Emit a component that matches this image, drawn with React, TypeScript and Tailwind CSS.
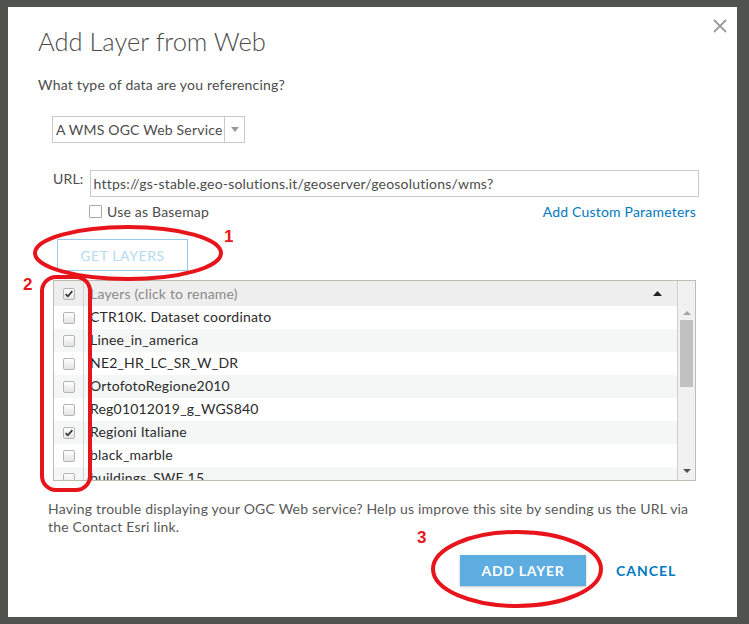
import React from 'react';

const layers = [
	{ name: 'CTR10K. Dataset coordinato', checked: false },
	{ name: 'Linee_in_america', checked: false },
	{ name: 'NE2_HR_LC_SR_W_DR', checked: false },
	{ name: 'OrtofotoRegione2010', checked: false },
	{ name: 'Reg01012019_g_WGS840', checked: false },
	{ name: 'Regioni Italiane', checked: true },
	{ name: 'black_marble', checked: false },
	{ name: 'buildings_SWE 15', checked: false },
];

function Box({ checked }: { checked: boolean }) {
	return (
		<span className="relative flex w-[12px] h-[12px] rounded-[2px] border border-[#b5b5b5] bg-gradient-to-b from-white to-[#e4e4e4] items-center justify-center">
			{checked && (
				<svg viewBox="0 0 12 12" className="w-[10px] h-[10px]">
					<path d="M2 6.2 L4.6 8.8 L10 2.6" fill="none" stroke="#333" strokeWidth="2" />
				</svg>
			)}
		</span>
	);
}

function Annotations() {
	return (
		<svg className="absolute inset-0 pointer-events-none" width="749" height="624" viewBox="0 0 749 624">
			<ellipse cx="128" cy="253" rx="93" ry="26" fill="none" stroke="#e8141c" strokeWidth="4" />
			<rect x="42" y="277" width="48" height="213" rx="14" fill="none" stroke="#e8141c" strokeWidth="4" />
			<ellipse cx="517" cy="569" rx="84" ry="37" fill="none" stroke="#e8141c" strokeWidth="4" />
			<text x="224" y="242" fill="#e8141c" fontSize="17" fontWeight="700" fontFamily="Liberation Sans, sans-serif">1</text>
			<text x="23" y="290" fill="#e8141c" fontSize="17" fontWeight="700" fontFamily="Liberation Sans, sans-serif">2</text>
			<text x="417" y="543" fill="#e8141c" fontSize="17" fontWeight="700" fontFamily="Liberation Sans, sans-serif">3</text>
		</svg>
	);
}

export default function App() {
	return (
		<div className="relative w-[749px] h-[624px] overflow-hidden bg-[#50534d] pl-2 pt-[7px] font-['Lato',sans-serif] tracking-[0.2px]">
			{/* Dialog */}
			<div className="relative w-[729px] h-[610px] bg-white pl-[30px] pt-[18px]">
				<button className="absolute right-[10px] top-[12px] w-[14px] h-[14px]">
					<svg viewBox="0 0 14 14" className="w-[14px] h-[14px]">
						<path d="M1 1 L13 13 M13 1 L1 13" stroke="#9a9a9a" strokeWidth="1.8" />
					</svg>
				</button>

				<h2 className="text-[25.5px] leading-[32px] font-light tracking-normal text-[#4c4c4c]">Add Layer from Web</h2>
				<p className="mt-[18px] text-[14px] leading-[20px] text-[#4c4c4c]">What type of data are you referencing?</p>

				{/* Type select */}
				<div className="mt-[21px] ml-[14px] flex w-[193px] h-[27px] border border-[#cacaca]">
					<span className="flex-1 pl-[3px] text-[14px] leading-[25px] text-[#4c4c4c]">A WMS OGC Web Service</span>
					<span className="w-[20px] border-l border-[#cacaca] flex items-center justify-center">
						<svg viewBox="0 0 8 5" className="w-[8px] h-[5px]">
							<path d="M0 0 L8 0 L4 5 Z" fill="#9a9a9a" />
						</svg>
					</span>
				</div>

				{/* URL */}
				<div className="mt-[27px] ml-[15px] flex items-start gap-[6px]">
					<span className="text-[14px] leading-[17px] text-[#4c4c4c]">URL:</span>
					<div className="w-[609px] h-[27px] border border-[#cacaca] pl-[3px] text-[14px] leading-[25px] text-[#4c4c4c]">
						https://gs-stable.geo-solutions.it/geoserver/geosolutions/wms?
					</div>
				</div>
				<div className="mt-[7px] ml-[51px] w-[607px] flex items-center justify-between">
					<label className="flex items-center gap-[5px] text-[14px] leading-[15px] text-[#4c4c4c]">
						<span className="w-[13px] h-[13px] border border-[#a8a8a8] rounded-[1px] bg-white" />
						Use as Basemap
					</label>
					<span className="text-[14px] leading-[15px] text-[#0079c1]">Add Custom Parameters</span>
				</div>

				{/* Get layers */}
				<button className="mt-[20px] ml-[19px] w-[131px] h-[32px] border border-[#92cbec] text-[14px] tracking-[0.6px] text-[#b4dbf2]">
					GET LAYERS
				</button>

				{/* Layers table */}
				<div className="mt-[9px] ml-[15px] w-[643px] h-[201px] border border-[#bdbdb0] flex overflow-hidden">
					<div className="flex-1 flex flex-col">
						<div className="flex h-[25px] shrink-0 bg-[#eeeeee] items-center">
							<div className="w-[30px] h-full border-r border-[#d4d4d4] flex items-center justify-center">
								<Box checked />
							</div>
							<span className="pl-[6px] pb-[1px] flex-1 text-[14px] text-[#8a8a8a]">Layers (click to rename)</span>
							<svg viewBox="0 0 9 5" className="w-[9px] h-[5px] mr-[15px]">
								<path d="M0 5 L9 5 L4.5 0 Z" fill="#222" />
							</svg>
						</div>
						{layers.map((l, i) => (
							<div key={l.name} className={`flex h-[23px] shrink-0 items-center ${i % 2 === 1 ? 'bg-[#f5f7f7]' : 'bg-white'}`}>
								<div className="w-[30px] h-full border-r border-[#d4d4d4] flex items-center justify-center">
									<Box checked={l.checked} />
								</div>
								<span className="pl-[6px] pb-[2px] text-[14px] text-[#2b2b2b]">{l.name}</span>
							</div>
						))}
					</div>
					{/* scrollbar */}
					<div className="w-[18px] h-full border-l border-[#cfcfcf] bg-[#f1f1f1] flex flex-col items-center pt-[27px]">
						<svg viewBox="0 0 8 4" className="w-[8px] h-[4px] mt-[3px]">
							<path d="M0 4 L8 4 L4 0 Z" fill="#a3a3a3" />
						</svg>
						<div className="mt-[5px] w-[13px] h-[67px] bg-[#c1c1c1]" />
						<div className="flex-1" />
						<svg viewBox="0 0 8 4" className="w-[8px] h-[4px] mb-[7px]">
							<path d="M0 0 L8 0 L4 4 Z" fill="#505050" />
						</svg>
					</div>
				</div>

				<p className="mt-[19px] ml-[10px] w-[652px] text-[14px] leading-[18px] text-[#595959]">
					Having trouble displaying your OGC Web service? Help us improve this site by sending us the URL via the Contact Esri link.
				</p>

				<div className="mt-[19px] ml-[422px] flex items-center gap-[30px]">
					<button className="w-[126px] h-[31px] bg-[#5dade0] shadow-[0_1px_2px_rgba(0,0,0,0.25)] text-[14px] font-bold tracking-[0.7px] text-white">
						ADD LAYER
					</button>
					<span className="text-[14px] font-bold tracking-[1px] text-[#0079c1]">CANCEL</span>
				</div>
			</div>
			<Annotations />
		</div>
	);
}
